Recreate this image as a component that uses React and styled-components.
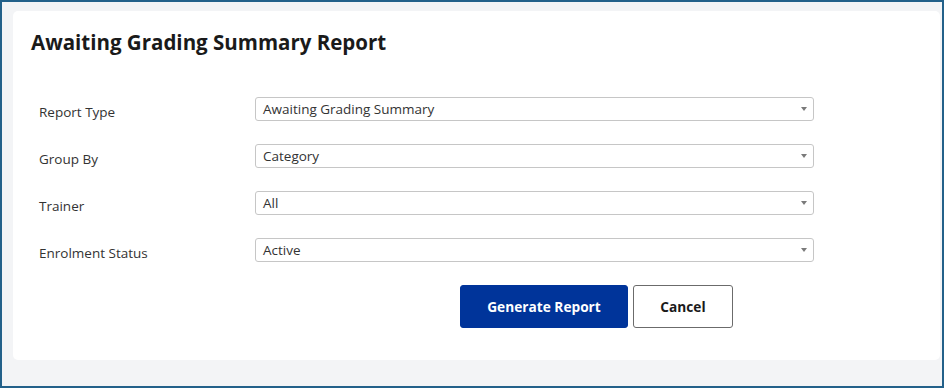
import React from 'react'
import styled, { createGlobalStyle } from 'styled-components'

const GlobalStyle = createGlobalStyle`
  body {
    margin: 0;
    font-family: "Open Sans", "Noto Sans", sans-serif;
  }
`;

const Frame = styled.div`
  width: 944px;
  height: 388px;
  box-sizing: border-box;
  border: 2px solid #23618a;
  background: #f3f4f6;
  padding: 9px 2px 0 11px;
`;

const Card = styled.section`
  background: #ffffff;
  border-radius: 5px;
  padding: 17px 18px 32px 18px;
`;

const Title = styled.h1`
  margin: 0;
  font-size: 20.5px;
  line-height: 28px;
  font-weight: 700;
  color: #1a1a1a;
`;

const Form = styled.form`
  margin-top: 41px;
  padding-left: 8px;
  display: grid;
  grid-template-columns: 216px 559px;
  row-gap: 23px;
  align-items: center;
`;

const Label = styled.label`
  font-size: 13.5px;
  color: #333;
  padding-top: 5px;
  line-height: 18px;
`;

const SelectBox = styled.div`
  height: 24px;
  box-sizing: border-box;
  border: 1px solid #c6c6c6;
  border-radius: 3px;
  display: flex;
  align-items: center;
  justify-content: space-between;
  padding: 0 6px 0 7px;
  font-size: 13.5px;
  color: #333;
`;

const Caret = styled.span`
  width: 0;
  height: 0;
  border-left: 3px solid transparent;
  border-right: 3px solid transparent;
  border-top: 4px solid #7a7a7a;
`;

const Actions = styled.div`
  grid-column: 2;
  display: flex;
  gap: 5px;
  padding-left: 205px;
`;

const Button = styled.button`
  height: 43px;
  width: ${p => p.$width}px;
  border-radius: 3px;
  font-family: inherit;
  font-size: 13.7px;
  font-weight: 700;
  cursor: pointer;
  background: ${p => (p.$primary ? '#00349a' : '#ffffff')};
  color: ${p => (p.$primary ? '#ffffff' : '#1a1a1a')};
  border: 1px solid ${p => (p.$primary ? '#00349a' : '#6b6b6b')};
`;

const fields = [
  { label: 'Report Type', value: 'Awaiting Grading Summary' },
  { label: 'Group By', value: 'Category' },
  { label: 'Trainer', value: 'All' },
  { label: 'Enrolment Status', value: 'Active' },
];

export default function App() {
  return (
    <>
      <GlobalStyle />
      <Frame>
        <Card>
          <Title>Awaiting Grading Summary Report</Title>
          <Form onSubmit={e => e.preventDefault()}>
            {fields.map(f => (
              <React.Fragment key={f.label}>
                <Label>{f.label}</Label>
                <SelectBox>
                  <span>{f.value}</span>
                  <Caret />
                </SelectBox>
              </React.Fragment>
            ))}
            <Actions>
              <Button $primary $width={168}>Generate Report</Button>
              <Button $width={100}>Cancel</Button>
            </Actions>
          </Form>
        </Card>
      </Frame>
    </>
  )
}
